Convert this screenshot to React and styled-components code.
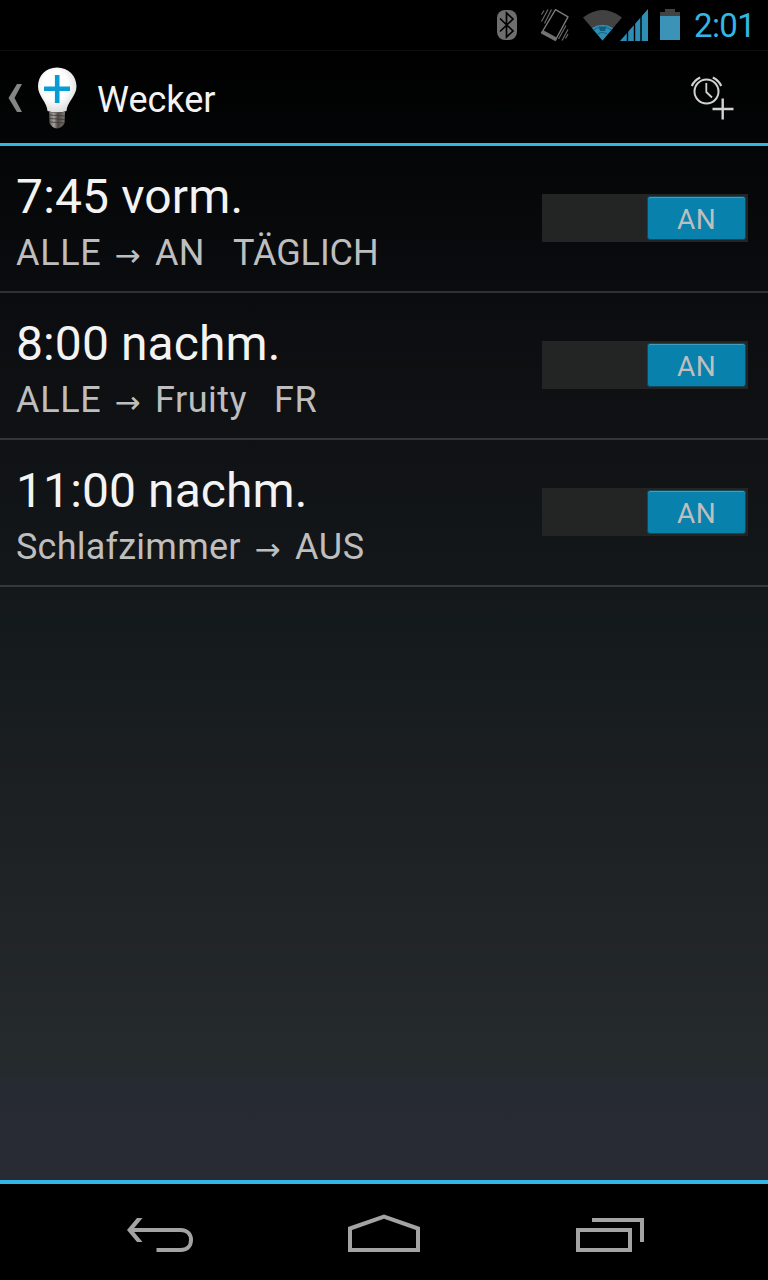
import React from "react";
import styled, { createGlobalStyle } from "styled-components";

const Global = createGlobalStyle`
  * { box-sizing: border-box; }
  body { margin: 0; background: #000; font-family: Roboto, "Liberation Sans", sans-serif; }
  svg { display: block; flex: none; }
`;

const Screen = styled.div`
  width: 768px;
  height: 1280px;
  display: flex;
  flex-direction: column;
  overflow: hidden;
  background: linear-gradient(180deg, #000 0, #000 50px, #040506 146px, #0b0c0f 290px, #121517 520px, #151a1c 640px, #1e2225 860px, #252a2c 1055px, #262a32 1085px, #282b33 1130px, #282b33 1180px);
`;

const StatusBar = styled.header`
  height: 50px;
  display: flex;
  justify-content: flex-end;
  background: #000;
`;

const Clock = styled.time`
  width: 74px;
  padding-top: 7px;
  font-size: 33px;
  line-height: 38px;
  letter-spacing: -0.6px;
  color: #33b5e5;
  white-space: nowrap;
`;

const ActionBar = styled.nav`
  height: 96px;
  display: flex;
  align-items: flex-start;
  border-top: 1px solid #0e0e0e;
  border-bottom: 3px solid #33b5e5;
`;

const Title = styled.h1`
  flex: 1;
  margin: 0;
  padding: 28px 0 0 1px;
  font-size: 36px;
  line-height: 42px;
  font-weight: 400;
  color: #f3f3f3;
`;

const List = styled.ul`
  flex: 1;
  margin: 0;
  padding: 0;
  list-style: none;
`;

const Row = styled.li`
  height: 147px;
  display: flex;
  justify-content: space-between;
  padding: 23px 20px 0 16px;
  border-bottom: 2px solid rgba(255, 255, 255, 0.15);
`;

const Time = styled.div`
  font-size: 48px;
  line-height: 56px;
  color: #f3f3f3;
  letter-spacing: ${(p) => p.$spacing}px;
  white-space: pre;
`;

const Detail = styled.div`
  display: flex;
  font-size: 36px;
  line-height: 42px;
  margin-top: 7px;
  color: #bebebe;
  white-space: pre;
`;

const Part = styled.span`
  width: ${(p) => p.$width}px;
  letter-spacing: ${(p) => p.$spacing || 0}px;
`;

const Arrow = styled.span`
  width: 54px;
  padding: 1px 1px 0 0;
  text-align: center;
  font-family: "Noto Sans", "DejaVu Sans", sans-serif;
  font-size: 31px;
`;

const Switch = styled.div`
  width: 206px;
  height: 48px;
  margin-top: 25px;
  display: flex;
  justify-content: flex-end;
  padding: 2px;
  background: #232424;
`;

const Thumb = styled.div`
  width: 99px;
  height: 44px;
  border: 1px solid #164858;
  border-radius: 3px;
  background: #0881ac;
  box-shadow: inset 0 1px 0 #3e9fc0;
  color: #bebebe;
  font-size: 28px;
  line-height: 45px;
  letter-spacing: 0.4px;
  text-align: center;
`;

const NavBar = styled.footer`
  height: 100px;
  border-top: 4px solid #33b5e5;
  background: #000;
  display: flex;
`;

const alarms = [
  { time: "7:45 vorm.", ts: 0.15, target: ["ALLE", 85, 0.7], action: ["AN", 78, 0.2], days: ["TÄGLICH", -0.1] },
  { time: "8:00 nachm.", ts: 0.1, target: ["ALLE", 85, 0.7], action: ["Fruity", 119, 0.5], days: ["FR", 0.6] },
  { time: "11:00 nachm.", ts: 0.1, target: ["Schlafzimmer", 225, 0.23], action: ["AUS", 78, 0.6] },
];

const StatusIcons = () => (
  <svg width="206" height="50" viewBox="488 0 206 50">
    <rect x="497" y="10" width="20" height="30" rx="8" fill="#6e6e6e" />
    <path d="M500 18.500L513 31L506.500 37V13L513 19L500 31.500" fill="none" stroke="#000" strokeWidth="1.700" />
    <path d="M555.500 9.700L568 16.900L555.500 40L541.800 32.500Z" fill="none" stroke="#7a7a7a" strokeWidth="1.400" strokeLinejoin="round" />
    <path d="M543 30.500L556.800 38L555.500 40.800L541 33Z" fill="#747474" stroke="#747474" strokeWidth="0.800" />
    <path d="M541.500 14.500L544 10.500M541.500 21.500L548 9.500M544.500 23.500L551.500 9.500M558.500 39L566 25.500M562 40.500L568 29.500M565.500 38.500L568 34" fill="none" stroke="#686868" strokeWidth="1.200" />
    <path d="M583 17.500Q602.500 2.500 622 17.500L602.500 40.500Z" fill="#424242" />
    <path d="M592 28Q602.500 21.500 613 28L602.500 40.500Z" fill="#2b8fb6" />
    <path d="M598.500 26.500H606.500L605 31H600Z" fill="#125c79" />
    <path d="M593.500 30Q597 27.500 600 27.500M605 27.500Q608 27.500 611.500 30M598 34Q602.500 31 607 34" fill="none" stroke="#17617e" strokeWidth="1.200" />
    <path d="M620 41L648 9V41Z" fill="#2c8eb5" />
    <path d="M627.500 20V41M634.500 16V41M641 9V41" stroke="#000" strokeWidth="1.400" />
    <path d="M660 12H665V9H675V12H680V16H660Z" fill="#424242" />
    <rect x="660" y="16" width="20" height="24" fill="#3b94b8" />
  </svg>
);

const Brand = () => (
  <svg width="96" height="92" viewBox="0 51 96 92">
    <defs>
      <radialGradient id="bulb" cx="0.45" cy="0.4" r="0.65">
        <stop offset="0.5" stopColor="#fff" />
        <stop offset="1" stopColor="#d5d5d5" />
      </radialGradient>
      <linearGradient id="cap">
        <stop offset="0" stopColor="#5e5855" />
        <stop offset="0.3" stopColor="#a7a19e" />
        <stop offset="0.55" stopColor="#4d4745" />
        <stop offset="1" stopColor="#7d7774" />
      </linearGradient>
    </defs>
    <path d="M17 84H22L14.500 98L22 112H17L8.500 98Z" fill="#858585" />
    <path d="M57 67.500C45.500 67.500 38 76 38 86.500C38 96 47 102 47.500 111Q57 114 66.500 111C67 102 76.500 96 76.500 86.500C76.500 76 68.500 67.500 57 67.500Z" fill="url(#bulb)" />
    <path d="M49 111.500Q57 114 65 111.500L64.500 123Q62 128 57 128.500Q52 128 49.500 123Z" fill="url(#cap)" />
    <path d="M49 115L65 116M49 118.500L65 119.500M50 122L64 123" stroke="#3c3735" strokeWidth="0.800" />
    <path d="M44 88.700H70M57.200 75V103" stroke="#079dd4" strokeWidth="4.600" />
  </svg>
);

const AddAlarm = () => (
  <svg width="98" height="92" viewBox="670 51 98 92" fill="none" stroke="#d2d2d2">
    <circle cx="706.500" cy="91.500" r="12" strokeWidth="2" />
    <path d="M706.300 83V92L712 97.500" strokeWidth="1.800" />
    <path d="M691.800 86Q694 80.500 700.200 77.500M712.800 77.500Q719 80.500 721.200 86" strokeWidth="2.200" />
    <path d="M712.500 109H733.500M722.700 98.500V119.500" strokeWidth="2.400" />
  </svg>
);

const NavIcons = () => (
  <svg width="768" height="96" viewBox="0 1184 768 96" fill="none" stroke="#a3a3a3" strokeWidth="4">
    <path d="M130 1230H180.500C188 1230 191 1235 191 1240C191 1245 188 1250 180.500 1250H156.500" />
    <path d="M127 1230L137 1218H142.500L132.500 1230L142.500 1242H137Z" fill="#a3a3a3" stroke="none" />
    <path d="M350 1228.500L384 1216.500L418 1228.500V1250H350Z" />
    <path d="M578 1230H630V1250H578ZM592 1220H642V1242" />
  </svg>
);

export default function App() {
  return (
    <Screen>
      <Global />
      <StatusBar>
        <StatusIcons />
        <Clock>2:01</Clock>
      </StatusBar>
      <ActionBar>
        <Brand />
        <Title>Wecker</Title>
        <AddAlarm />
      </ActionBar>
      <List>
        {alarms.map(({ time, ts, target, action, days }) => (
          <Row key={time}>
            <div>
              <Time $spacing={ts}>{time}</Time>
              <Detail>
                <Part $width={target[1]} $spacing={target[2]}>{target[0]}</Part>
                <Arrow>→</Arrow>
                <Part $width={action[1]} $spacing={action[2]}>{action[0]}</Part>
                {days && <Part $spacing={days[1]}>{days[0]}</Part>}
              </Detail>
            </div>
            <Switch>
              <Thumb>AN</Thumb>
            </Switch>
          </Row>
        ))}
      </List>
      <NavBar>
        <NavIcons />
      </NavBar>
    </Screen>
  );
}
